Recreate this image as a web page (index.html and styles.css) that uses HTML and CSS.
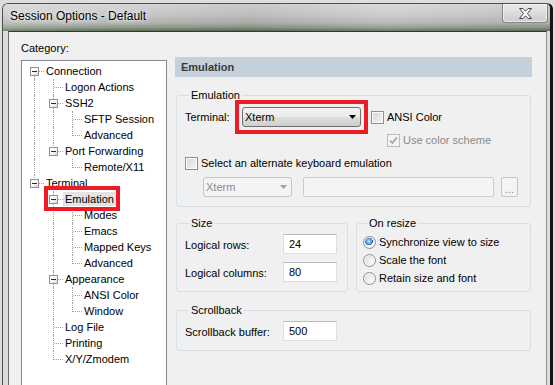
FILE: index.html
```html
<!DOCTYPE html>
<html lang="en">
<head>
    <meta charset="UTF-8">
    <meta name="viewport" content="width=device-width, initial-scale=1.0">
    <title>Session Options - Default</title>
    <link rel="stylesheet" href="styles.css">
</head>
<body>
    <div class="window">
        <div class="titlebar">
            <span class="title">Session Options - Default</span>
            <button class="close" aria-label="Close">
                <svg width="13" height="11" viewBox="0 0 13 11">
                    <path d="M0.5 0.5H4L6.5 3.2L9 0.5H12.5L8.4 5.5L12.5 10.5H9L6.5 7.8L4 10.5H0.5L4.6 5.5Z" fill="#fff" stroke="#3d4654" stroke-width="1" stroke-linejoin="round"/>
                </svg>
            </button>
        </div>

        <div class="client">
            <div class="category">
                <div class="cat-label">Category:</div>
                <div class="tree">
                    <div class="row"><i class="c f"><b class="pm"></b></i><span class="txt">Connection</span></div>
                    <div class="row"><i class="c v"></i><i class="c t"></i><span class="txt">Logon Actions</span></div>
                    <div class="row"><i class="c v"></i><i class="c t"><b class="pm"></b></i><span class="txt">SSH2</span></div>
                    <div class="row"><i class="c v"></i><i class="c v"></i><i class="c t"></i><span class="txt">SFTP Session</span></div>
                    <div class="row"><i class="c v"></i><i class="c v"></i><i class="c l"></i><span class="txt">Advanced</span></div>
                    <div class="row"><i class="c v"></i><i class="c l"><b class="pm"></b></i><span class="txt">Port Forwarding</span></div>
                    <div class="row"><i class="c v"></i><i class="c"></i><i class="c l"></i><span class="txt">Remote/X11</span></div>
                    <div class="row"><i class="c l"><b class="pm"></b></i><span class="txt">Terminal</span></div>
                    <div class="row"><i class="c"></i><i class="c t"><b class="pm"></b></i><span class="txt sel">Emulation</span></div>
                    <div class="row"><i class="c"></i><i class="c v"></i><i class="c t"></i><span class="txt">Modes</span></div>
                    <div class="row"><i class="c"></i><i class="c v"></i><i class="c t"></i><span class="txt">Emacs</span></div>
                    <div class="row"><i class="c"></i><i class="c v"></i><i class="c t"></i><span class="txt">Mapped Keys</span></div>
                    <div class="row"><i class="c"></i><i class="c v"></i><i class="c l"></i><span class="txt">Advanced</span></div>
                    <div class="row"><i class="c"></i><i class="c t"><b class="pm"></b></i><span class="txt">Appearance</span></div>
                    <div class="row"><i class="c"></i><i class="c v"></i><i class="c t"></i><span class="txt">ANSI Color</span></div>
                    <div class="row"><i class="c"></i><i class="c v"></i><i class="c l"></i><span class="txt">Window</span></div>
                    <div class="row"><i class="c"></i><i class="c t"></i><span class="txt">Log File</span></div>
                    <div class="row"><i class="c"></i><i class="c t"></i><span class="txt">Printing</span></div>
                    <div class="row"><i class="c"></i><i class="c l"></i><span class="txt">X/Y/Zmodem</span></div>
                    <div class="mark"></div>
                </div>
            </div>

            <div class="panel">
                <div class="panel-head">Emulation</div>

                <fieldset class="group emu">
                    <legend>Emulation</legend>
                    <div class="term-line">
                        <span class="term-lbl">Terminal:</span>
                        <div class="mark-box">
                            <div class="combo main">
                                <span>Xterm</span>
                                <svg width="7" height="4" viewBox="0 0 7 4"><path d="M0 0H7L3.5 4Z" fill="#000"/></svg>
                            </div>
                        </div>
                        <label class="check ansi"><span class="cb"></span>ANSI Color</label>
                    </div>
                    <label class="check scheme disabled">
                        <span class="cb on">
                            <svg width="11" height="11" viewBox="0 0 11 11"><path d="M2.2 5.6L4.4 8L8.8 2.6" fill="none" stroke="#a3a3a3" stroke-width="1.7"/></svg>
                        </span>Use color scheme
                    </label>
                    <label class="check alt"><span class="cb"></span>Select an alternate keyboard emulation</label>
                    <div class="alt-line">
                        <div class="combo off">
                            <span>Xterm</span>
                            <svg width="7" height="4" viewBox="0 0 7 4"><path d="M0 0H7L3.5 4Z" fill="#a2a2a2"/></svg>
                        </div>
                        <div class="field off"></div>
                        <div class="more">...</div>
                    </div>
                </fieldset>

                <div class="pair">
                    <fieldset class="group size">
                        <legend>Size</legend>
                        <div class="num-row">
                            <span class="num-lbl">Logical rows:</span>
                            <div class="num">24</div>
                        </div>
                        <div class="num-row">
                            <span class="num-lbl">Logical columns:</span>
                            <div class="num">80</div>
                        </div>
                    </fieldset>

                    <fieldset class="group resize">
                        <legend>On resize</legend>
                        <label class="radio"><span class="rb on"></span>Synchronize view to size</label>
                        <label class="radio"><span class="rb"></span>Scale the font</label>
                        <label class="radio"><span class="rb"></span>Retain size and font</label>
                    </fieldset>
                </div>

                <fieldset class="group scroll">
                    <legend>Scrollback</legend>
                    <div class="num-row">
                        <span class="num-lbl">Scrollback buffer:</span>
                        <div class="num">500</div>
                    </div>
                </fieldset>
            </div>
        </div>
    </div>
</body>
</html>
```

FILE: styles.css
```css
:root {
    --mark-red: #ed1c24;
    --group-line: #d5dfe5;
    --tree-dots: #a0a0a0;
    --dim-text: #8a8a8a;
}

* {
    box-sizing: border-box;
    margin: 0;
    padding: 0;
}

body {
    width: 555px;
    height: 385px;
    overflow: hidden;
    background: #dedede;
    font-family: "Liberation Sans", Arial, sans-serif;
    font-size: 11px;
    color: #000;
    padding: 3px 0 0 2px;
}

/* window frame */

.window {
    width: 551px;
    height: 400px;
    display: flex;
    flex-direction: column;
    border: 1px solid #4f4f4f;
    border-right: 3px solid #151515;
    border-bottom: none;
    border-radius: 6px 6px 0 0;
    background: #dcdcdc;
}

.titlebar {
    height: 27px;
    flex: none;
    display: flex;
    justify-content: space-between;
    align-items: flex-start;
    border-radius: 5px 5px 0 0;
    background:
        linear-gradient(90deg, rgba(255,255,255,0.15) 0, rgba(0,0,0,0) 20%, rgba(0,0,0,0.06) 45%, rgba(255,255,255,0.08) 70%, rgba(0,0,0,0.04) 100%),
        linear-gradient(to bottom, #d7d7d7 0, #c9c9c9 40%, #b3b6b1 70%, #8b9787 88%, #5d6c57 100%);
}

.title {
    padding: 5px 0 0 7px;
    font-size: 12px;
    line-height: 15px;
    text-shadow: 0 0 6px rgba(255,255,255,0.9), 0 0 3px rgba(255,255,255,0.7);
}

.close {
    width: 46px;
    height: 19px;
    margin-right: 2px;
    display: flex;
    align-items: center;
    justify-content: center;
    border: 1px solid #858585;
    border-top: none;
    border-radius: 0 0 4px 4px;
    background: linear-gradient(to bottom, #ececec 0, #dadada 55%, #cdcdcd 100%);
    box-shadow: inset 0 0 0 1px rgba(255,255,255,0.55);
}

.client {
    flex: 1;
    display: flex;
    gap: 8px;
    margin: 0 3px 0 5px;
    padding-left: 12px;
    background: #f0f0f0;
    border: 1px solid #6d6d6d;
    border-top-color: #2f3b2d;
    border-right-color: #8c8c8c;
    border-bottom: none;
}

/* category tree */

.category {
    width: 146px;
    flex: none;
    padding-top: 10px;
}

.cat-label {
    line-height: 13px;
    margin-bottom: 5px;
}

.tree {
    position: relative;
    height: 340px;
    padding: 2px 0 0 3px;
    background: #fff;
    border: 1px solid #828790;
}

.row {
    display: flex;
    height: 16px;
}

.c {
    position: relative;
    flex: none;
    width: 19px;
    height: 16px;
}

.v::before, .t::before, .l::before, .f::before {
    content: "";
    position: absolute;
    left: 9px;
    top: 0;
    height: 16px;
    border-left: 1px dotted var(--tree-dots);
}

.l::before {
    height: 9px;
}

.f::before {
    top: 8px;
    height: 8px;
}

.t::after, .l::after, .f::after {
    content: "";
    position: absolute;
    left: 10px;
    top: 8px;
    width: 9px;
    border-top: 1px dotted var(--tree-dots);
}

.pm {
    position: absolute;
    left: 5px;
    top: 4px;
    width: 9px;
    height: 9px;
    z-index: 1;
    border: 1px solid #919191;
    background: linear-gradient(135deg, #ffffff 35%, #d9d9d9 100%);
}

.pm::after {
    content: "";
    position: absolute;
    left: 1px;
    top: 3px;
    width: 5px;
    height: 1px;
    background: #2b2b2b;
}

.txt {
    height: 14px;
    margin-top: 1px;
    padding: 0 2px;
    line-height: 14px;
    white-space: nowrap;
}

.txt.sel {
    background: #e4e4e4;
}

/* red annotation drawn over the selected node */
.mark {
    position: absolute;
    left: 22px;
    top: 125px;
    width: 76px;
    height: 25px;
    border: 4px solid var(--mark-red);
}

/* right panel */

.panel {
    width: 357px;
    flex: none;
    padding-top: 25px;
}

.panel-head {
    height: 20px;
    padding-left: 6px;
    line-height: 20px;
    font-weight: bold;
    color: #3a3a3a;
    background: #c4d1dd;
}

.group {
    min-width: 0;
    margin: 12px 1px 0;
    border: 1px solid var(--group-line);
    border-radius: 3px;
}

.group legend {
    margin-left: 4px;
    padding: 0 2px;
    line-height: 13px;
}

.emu {
    padding: 5px 0 9px 8px;
}

.term-line {
    display: flex;
    align-items: center;
    height: 20px;
}

.term-lbl {
    width: 57px;
}

.mark-box {
    margin: -7px;
    padding: 3px;
    border: 4px solid var(--mark-red);
}

.combo {
    display: flex;
    align-items: center;
    justify-content: space-between;
    height: 20px;
    padding: 0 4px 0 2px;
    border-radius: 3px;
}

.combo.main {
    width: 119px;
    border: 1px solid #707070;
    background: linear-gradient(to bottom, #f3f3f3 0, #ebebeb 50%, #dedede 50%, #cfcfcf 100%);
}

.combo.off {
    width: 89px;
    color: var(--dim-text);
    border: 1px solid #c3c6c9;
    background: #f4f4f4;
}

.check {
    display: flex;
    align-items: center;
    gap: 3px;
    height: 13px;
    line-height: 13px;
    white-space: nowrap;
}

.check.ansi {
    margin-left: 10px;
}

.check.scheme {
    margin: 7px 0 0 202px;
}

.check.alt {
    margin-top: 10px;
}

.check.disabled {
    color: var(--dim-text);
}

.cb {
    flex: none;
    width: 13px;
    height: 13px;
    display: flex;
    align-items: center;
    justify-content: center;
    border: 1px solid #8e8f8f;
    background: linear-gradient(135deg, #d3d6da 0, #f7f7f7 100%);
    box-shadow: inset 0 0 0 1px #fdfdfd;
}

.cb.on {
    border-color: #bcbcbc;
    background: #f4f4f4;
    box-shadow: none;
}

.alt-line {
    display: flex;
    height: 20px;
    margin: 7px 0 0 18px;
}

.field.off {
    width: 191px;
    margin-left: 11px;
    border: 1px solid #c9cdd1;
    border-radius: 2px;
    background: #f4f4f4;
}

.more {
    width: 17px;
    margin-left: 7px;
    text-align: center;
    line-height: 22px;
    color: var(--dim-text);
    border: 1px solid #c3c6c9;
    border-radius: 2px;
    background: #f4f4f4;
}

.pair {
    display: flex;
    gap: 8px;
    margin: 10px 1px 0;
}

.pair .group {
    margin: 0;
}

.size {
    width: 172px;
    flex: none;
    padding: 4px 0 9px 8px;
}

.num-row {
    display: flex;
    height: 20px;
}

.num-row + .num-row {
    margin-top: 8px;
}

.num-lbl {
    width: 98px;
    padding-top: 5px;
    line-height: 13px;
}

.num {
    width: 54px;
    height: 20px;
    padding-left: 5px;
    line-height: 18px;
    background: #fff;
    border: 1px solid #dadde2;
    border-top-color: #b9bcc1;
}

.resize {
    flex: 1;
    padding: 3px 0 0 6px;
}

.radio {
    display: flex;
    align-items: center;
    gap: 3px;
    height: 18px;
    white-space: nowrap;
}

.rb {
    flex: none;
    width: 13px;
    height: 13px;
    border-radius: 50%;
    border: 1px solid #8e8f8f;
    background: radial-gradient(circle at 65% 65%, #fbfbfb 0, #e4e4e4 60%, #cfd1d4 100%);
    box-shadow: inset 0 0 0 1px #fafafa;
}

.rb.on {
    background:
        radial-gradient(circle at 45% 40%, #c7e6ff 0, #5aa2e4 28%, #1f5da3 42%, transparent 45%),
        radial-gradient(circle at 65% 65%, #fbfbfb 0, #e4e4e4 60%, #cfd1d4 100%);
}

.scroll {
    margin-top: 12px;
    padding: 4px 0 9px 8px;
}
```
